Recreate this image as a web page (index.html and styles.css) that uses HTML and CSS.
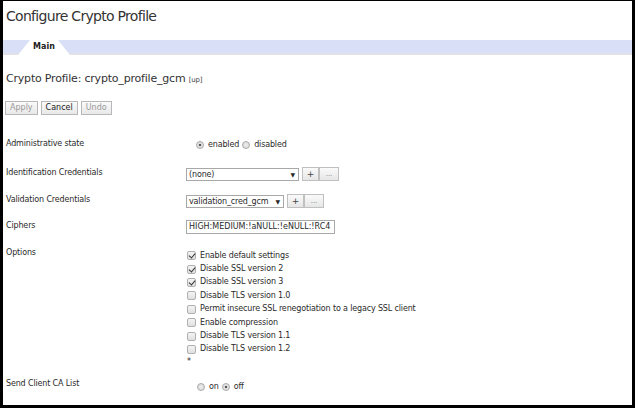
FILE: index.html
```html
<!DOCTYPE html>
<html>
<head>
<meta charset="utf-8">
<link rel="stylesheet" href="styles.css">
</head>
<body>
<div class="frame">
  <h1 class="title">Configure Crypto Profile</h1>
  <div class="tabbar">
    <div class="tab"><span>Main</span></div>
  </div>
  <div class="objname">Crypto Profile: crypto_profile_gcm <span class="status">[up]</span></div>
  <div class="actions">
    <button class="btn disabled">Apply</button>
    <button class="btn">Cancel</button>
    <button class="btn disabled">Undo</button>
  </div>
  <div class="form">
    <div class="row r-admin">
      <div class="label">Administrative state</div>
      <div class="field radios">
        <span class="radio on"></span><span class="rlabel">enabled</span>
        <span class="radio"></span><span class="rlabel">disabled</span>
      </div>
    </div>
    <div class="row r-id">
      <div class="label">Identification Credentials</div>
      <div class="field">
        <div class="select w1"><span>(none)</span><span class="arrow">&#9660;</span></div>
        <button class="sbtn plus">+</button><button class="sbtn dots">...</button>
      </div>
    </div>
    <div class="row r-val">
      <div class="label">Validation Credentials</div>
      <div class="field">
        <div class="select w2"><span>validation_cred_gcm</span><span class="arrow">&#9660;</span></div>
        <button class="sbtn plus">+</button><button class="sbtn dots">...</button>
      </div>
    </div>
    <div class="row r-ciph">
      <div class="label">Ciphers</div>
      <div class="field">
        <div class="textin">HIGH:MEDIUM:!aNULL:!eNULL:!RC4</div>
      </div>
    </div>
    <div class="row r-opt">
      <div class="label">Options</div>
      <div class="field checks">
        <div class="check"><span class="box on"></span>Enable default settings</div>
        <div class="check"><span class="box on"></span>Disable SSL version 2</div>
        <div class="check"><span class="box on"></span>Disable SSL version 3</div>
        <div class="check"><span class="box"></span>Disable TLS version 1.0</div>
        <div class="check"><span class="box"></span>Permit insecure SSL renegotiation to a legacy SSL client</div>
        <div class="check"><span class="box"></span>Enable compression</div>
        <div class="check"><span class="box"></span>Disable TLS version 1.1</div>
        <div class="check"><span class="box"></span>Disable TLS version 1.2</div>
        <div class="star">*</div>
      </div>
    </div>
    <div class="row r-send">
      <div class="label">Send Client CA List</div>
      <div class="field radios">
        <span class="radio"></span><span class="rlabel">on</span>
        <span class="radio on"></span><span class="rlabel">off</span>
      </div>
    </div>
  </div>
</div>
</body>
</html>
```
FILE: styles.css
```css
html, body { margin: 0; padding: 0; background: #000; }
body { width: 635px; height: 408px; overflow: hidden; font-family: "DejaVu Sans", Verdana, sans-serif; color: #222; }
.frame {
  position: relative;
  margin: 1px 3px 0 3px;
  width: 629px;
  height: 404px;
  background: #fff;
  overflow: hidden;
}
.title {
  margin: 0;
  padding: 7px 0 0 3px;
  height: 32px;
  box-sizing: border-box;
  font-size: 14px;
  font-weight: normal;
  color: #333;
  letter-spacing: -0.7px;
}
.tabbar {
  margin-top: 7px;
  height: 13px;
  background: #d9dff7;
  border-bottom: 2px solid #e2e2e6;
  position: relative;
}
.tab {
  position: absolute;
  left: 15px;
  top: 0;
  width: 52px;
  height: 15px;
}
.tab::before {
  content: "";
  position: absolute;
  inset: 0;
  background: #fff;
  clip-path: polygon(12px 0, 40px 0, 52px 100%, 0 100%);
}
.tab span {
  position: relative;
  display: block;
  text-align: center;
  font-size: 8px;
  font-weight: bold;
  line-height: 14px;
  color: #222;
}
.objname {
  margin-top: 17px;
  padding-left: 3px;
  font-size: 11px;
  color: #333;
  height: 14px;
  line-height: 14px;
  letter-spacing: -0.2px;
}
.status { font-size: 7px; color: #444; }
.actions {
  margin-top: 15px;
  padding-left: 2px;
  display: flex;
  gap: 3px;
}
.btn {
  font-family: inherit;
  font-size: 8px;
  height: 14px;
  padding: 0 4px;
  border: 1px solid #b8b8b8;
  background: linear-gradient(#fafafa, #e8e8e8);
  color: #222;
  line-height: 12px;
}
.btn.disabled { color: #999; }
.form { margin-top: 23px; padding-left: 3px; font-size: 8px; letter-spacing: -0.15px; color: #2a2a2a; }
.row { display: flex; align-items: flex-start; }
.label { width: 180px; flex: none; line-height: 12px; }
.field { display: flex; align-items: center; }
.r-admin { height: 28px; }
.r-admin .field { margin-top: 1px; padding-left: 10px; }
.radio {
  width: 8px; height: 8px;
  border: 1px solid #aaa;
  border-radius: 50%;
  background: radial-gradient(circle, #eee 0, #d4d4d4 100%);
  box-sizing: border-box;
  margin-right: 4px;
}
.radio.on { background: radial-gradient(circle, #555 0, #555 28%, #e6e6e6 38%, #d8d8d8 100%); }
.rlabel { margin-right: 3px; line-height: 12px; }
.r-id { height: 27px; }
.r-val { height: 26px; }
.r-ciph { height: 28px; }
.r-id .label, .r-val .label, .r-ciph .label { margin-top: 1px; }
.r-id .field, .r-val .field, .r-ciph .field { margin-top: 1px; }
.select {
  box-sizing: border-box;
  height: 13px;
  border: 1px solid #a8a8a8;
  display: flex;
  justify-content: space-between;
  align-items: center;
  padding: 0 3px 0 2px;
  margin-right: 3px;
  background: #fff;
}
.select.w1 { width: 113px; }
.select.w2 { width: 98px; }
.arrow { font-size: 6px; }
.sbtn {
  font-family: inherit;
  box-sizing: border-box;
  height: 14px;
  border: 1px solid #c0c0c0;
  background: linear-gradient(#fafafa, #e6e6e6);
  font-size: 9px;
  padding: 0;
  color: #444;
  line-height: 12px;
}
.sbtn.plus { width: 17px; }
.sbtn.dots { width: 20px; font-size: 7px; color: #777; }
.textin {
  box-sizing: border-box;
  width: 149px;
  height: 14px;
  border: 1px solid #a8a8a8;
  padding: 0 2px;
  line-height: 12px;
  white-space: nowrap;
  overflow: hidden;
  letter-spacing: 0;
}
.r-opt .field { flex-direction: column; align-items: flex-start; margin-top: 2px; }
.check { display: flex; align-items: center; height: 13.4px; line-height: 12px; }
.box {
  width: 9px; height: 9px;
  box-sizing: border-box;
  border: 1px solid #b0b0b0;
  border-radius: 2px;
  background: linear-gradient(#f4f4f4, #e0e0e0);
  margin: 0 4px 0 1px;
  position: relative;
}
.box.on::after {
  content: "";
  position: absolute;
  left: 2px; top: 0px;
  width: 3px; height: 5px;
  border: solid #333;
  border-width: 0 1.5px 1.5px 0;
  transform: rotate(40deg);
}
.star { line-height: 12px; padding-left: 1px; height: 12px; }
.r-send { margin-top: 10px; }
.r-send .field { margin-top: 3px; padding-left: 11px; }
```
